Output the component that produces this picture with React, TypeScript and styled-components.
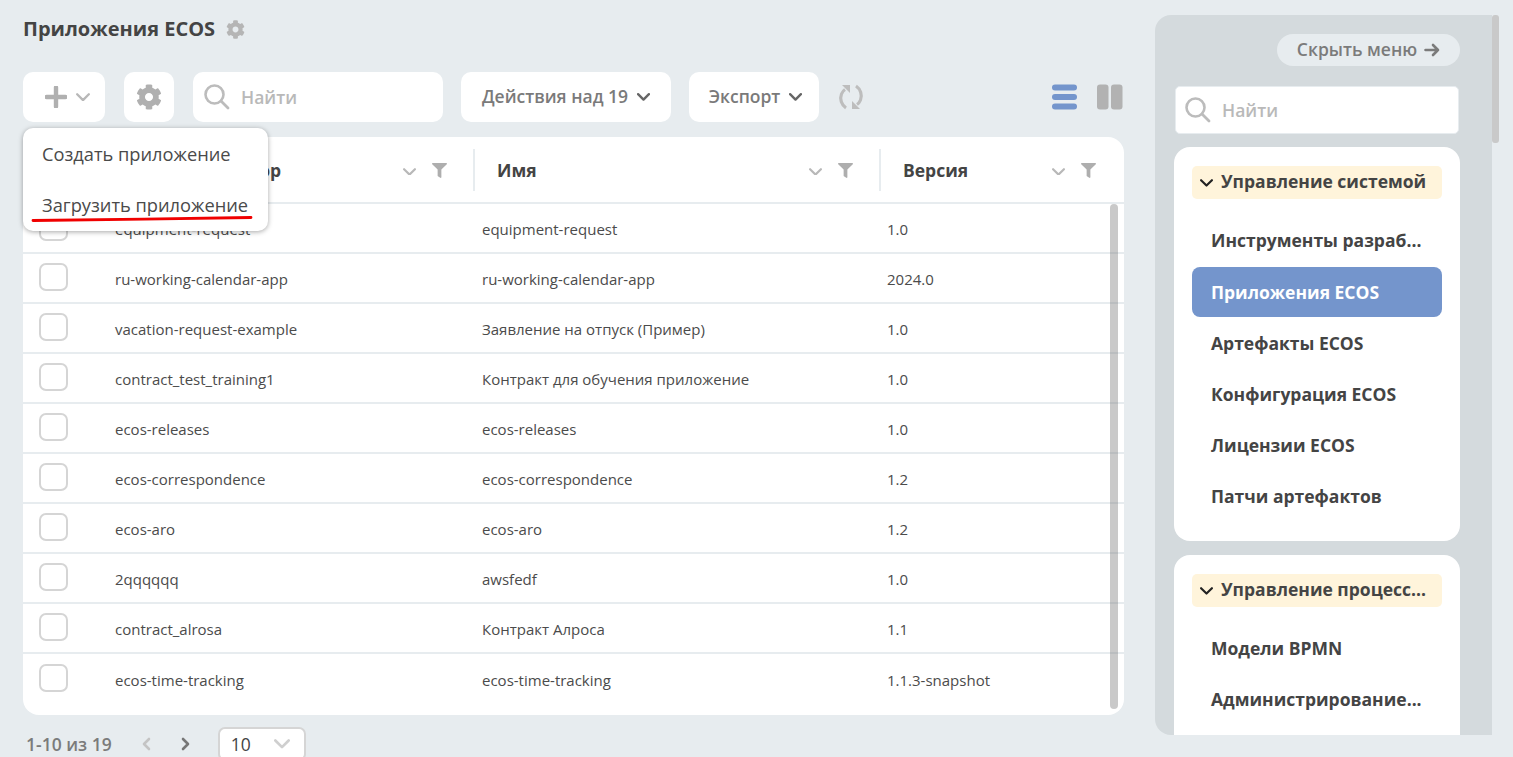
import React from 'react';
import styled, { createGlobalStyle } from 'styled-components';
import { FaCog, FaFilter } from 'react-icons/fa';

const GlobalStyle = createGlobalStyle`
  html, body {
    margin: 0;
    height: 100%;
    overflow: hidden;
    background: #e7ecef;
    font-family: "Open Sans", "Liberation Sans", sans-serif;
    color: #444;
  }
  * { box-sizing: border-box; }
`;

const Page = styled.div`
  display: flex;
  align-items: flex-start;
  height: 757px;
  padding: 15px 14px 0 23px;
`;

const Main = styled.main`
  position: relative;
  width: 1101px;
  flex-shrink: 0;
`;

const TitleRow = styled.div`
  display: flex;
  align-items: center;
  gap: 11px;
  height: 28px;
`;

const Title = styled.h1`
  margin: 0;
  font-size: 20px;
  line-height: 28px;
  font-weight: 700;
  color: #444;
`;

const Toolbar = styled.div`
  display: flex;
  align-items: center;
  height: 50px;
  margin-top: 29px;
`;

const ToolButton = styled.div<{ $w: number; $mr: number }>`
  display: flex;
  align-items: center;
  justify-content: center;
  gap: 9px;
  width: ${(p) => p.$w}px;
  height: 50px;
  margin-right: ${(p) => p.$mr}px;
  background: #fff;
  border-radius: 10px;
  font-size: 17.5px;
  font-weight: 600;
  color: #7a7a7a;
  flex-shrink: 0;
`;

const AddButton = styled(ToolButton)`
  padding-left: 7px;
`;

const MenuButton = styled(ToolButton)<{ $shift?: number }>`
  padding-left: ${(p) => p.$shift || 0}px;
  padding-bottom: 2px;

  svg {
    margin-top: 2px;
  }
`;

const SearchField = styled.div`
  display: flex;
  align-items: center;
  gap: 11px;
  width: 250px;
  height: 50px;
  margin-right: 18px;
  padding-left: 11px;
  padding-bottom: 1px;
  background: #fff;
  border-radius: 10px;
  font-size: 17.5px;
  font-weight: 600;
  color: #b9b9b9;
  flex-shrink: 0;
`;

const RefreshSlot = styled.div`
  display: flex;
  margin-left: 19px;
`;

const ViewSwitch = styled.div`
  display: flex;
  align-items: center;
  gap: 19px;
  margin-left: auto;
  margin-right: 1px;
`;

const Table = styled.section`
  position: relative;
  height: 578px;
  margin-top: 15px;
  background: #fff;
  border-radius: 16px;
  overflow: hidden;
`;

const HeadRow = styled.div`
  display: grid;
  grid-template-columns: 84px 366px 406px 1fr;
  height: 67px;
  border-bottom: 2px solid #e7ecef;
  padding-top: 12px;
`;

const HeadCell = styled.div<{ $sep?: boolean }>`
  display: flex;
  align-items: center;
  height: 42px;
  padding-left: ${(p) => (p.$sep ? 22 : 24)}px;
  padding-right: 26px;
  border-left: ${(p) => (p.$sep ? '2px solid #e7ecef' : '0 none')};
  font-size: 17.5px;
  font-weight: 700;
  color: #444;

  &:last-child {
    padding-right: 28px;
  }
`;

const HeadLabel = styled.span`
  flex: 1;
  white-space: nowrap;
`;

const HeadIcons = styled.span`
  display: flex;
  align-items: center;
  gap: 16px;
  color: #aeaeae;

  svg:first-child {
    margin-top: 3px;
  }
`;

const Row = styled.div`
  display: grid;
  grid-template-columns: 84px 367px 405px 1fr;
  align-items: center;
  height: 50px;
  border-bottom: 2px solid #e7ecef;
  font-size: 15px;
  color: #4b4b4b;

  &:last-child {
    border-bottom: 0 none;
  }
`;

const CheckCell = styled.div`
  padding-left: 16px;
  padding-bottom: 2px;
`;

const Check = styled.span`
  display: block;
  width: 29px;
  height: 28px;
  border: 2px solid #d5d5d5;
  border-radius: 7px;
  background: #fff;
`;

const Cell = styled.div`
  padding-left: 8px;
  padding-top: 2px;
`;

const TableScroll = styled.div`
  position: absolute;
  left: 1087px;
  top: 67px;
  width: 8px;
  height: 505px;
  background: rgba(120, 120, 120, 0.4);
  border-radius: 4px;
`;

const Footer = styled.div`
  display: flex;
  align-items: center;
  height: 32px;
  margin-top: 13px;
  padding-left: 3px;
  font-size: 17.5px;
  font-weight: 600;
  color: #7b7b7b;
`;

const Pager = styled.div`
  display: flex;
  align-items: center;
  gap: 30px;
  margin-left: 29px;
  margin-right: 27px;
`;

const PageSize = styled.div`
  display: flex;
  align-items: center;
  justify-content: space-between;
  width: 88px;
  height: 34px;
  padding: 0 14px 0 11px;
  background: #fff;
  border: 2px solid #d5d5d5;
  border-radius: 7px;
  font-size: 17.5px;
  font-weight: 400;
  color: #444;
`;

const Menu = styled.div`
  position: absolute;
  left: 0;
  top: 113px;
  width: 245px;
  height: 103px;
  padding: 9px 19px 0;
  background: #fff;
  border-radius: 10px;
  box-shadow: 0 1px 5px rgba(0, 0, 0, 0.35);
  font-size: 18.25px;
  color: #4a4a4a;
  z-index: 2;
`;

const MenuItem = styled.div`
  height: 51px;
  line-height: 33px;
  white-space: nowrap;
`;

const Underline = styled.svg`
  position: absolute;
  left: 8px;
  top: 87px;
`;

const Sidebar = styled.aside`
  display: flex;
  flex-direction: column;
  width: 337px;
  height: 720px;
  margin-left: 31px;
  padding: 19px 32px 0 19px;
  background: #d4dadd;
  border-radius: 16px 0 0 16px;
  overflow: hidden;
  flex-shrink: 0;
`;

const HideButton = styled.div`
  display: flex;
  align-items: center;
  justify-content: center;
  gap: 7px;
  align-self: flex-end;
  width: 183px;
  height: 32px;
  padding-bottom: 2px;
  background: #e7ecef;
  border-radius: 16px;
  font-size: 17.5px;
  font-weight: 600;
  color: #7b7b7b;
  flex-shrink: 0;

  svg {
    margin-top: 2px;
  }
`;

const SideSearch = styled(SearchField)`
  width: 284px;
  height: 48px;
  margin: 20px 0 13px 1px;
  padding-left: 9px;
  border: 1px solid #e7ecef;
  border-radius: 5px;
`;

const SideCard = styled.div<{ $h: number }>`
  height: ${(p) => p.$h}px;
  margin-bottom: 14px;
  padding: 19px 18px 0;
  background: #fff;
  border-radius: 16px;
  flex-shrink: 0;
`;

const Group = styled.div`
  display: flex;
  align-items: center;
  gap: 8px;
  height: 33px;
  margin-bottom: 15px;
  padding-left: 8px;
  padding-bottom: 4px;
  background: #fff4db;
  border-radius: 5px;
  font-size: 17.5px;
  font-weight: 700;
  color: #444;

  svg {
    margin-top: 5px;
  }
`;

const SideItem = styled.div<{ $active?: boolean }>`
  display: flex;
  align-items: center;
  height: ${(p) => (p.$active ? 50 : 51)}px;
  margin-top: ${(p) => (p.$active ? 2 : 0)}px;
  padding-left: 19px;
  border-radius: 8px;
  background: ${(p) => (p.$active ? '#7495cc' : 'transparent')};
  font-size: 17.5px;
  font-weight: 700;
  color: ${(p) => (p.$active ? '#fff' : '#444')};
`;

const PageScroll = styled.div`
  width: 7px;
  height: 128px;
  background: #c9c9c9;
  border-radius: 3px;
  flex-shrink: 0;
`;

const Chevron = ({ size = 12, color = '#b8b8b8', width = 2 }: { size?: number; color?: string; width?: number }) => (
  <svg width={size} height={size * 0.6} viewBox="0 0 12 7" fill="none">
    <path d="M1 1l5 5 5-5" stroke={color} strokeWidth={width} strokeLinecap="round" strokeLinejoin="round" />
  </svg>
);

const Back = ({ color, flip }: { color: string; flip?: boolean }) => (
  <svg width="10" height="14" viewBox="0 0 10 14" fill="none">
    <path d={flip ? 'M2 2l5 5-5 5' : 'M8 2L3 7l5 5'} stroke={color} strokeWidth="2.6" strokeLinecap="round" strokeLinejoin="round" />
  </svg>
);

const SearchIcon = () => (
  <svg width="26" height="26" viewBox="0 0 26 26" fill="none">
    <circle cx="10.5" cy="10.5" r="9" stroke="#bcbcbc" strokeWidth="2.6" />
    <path d="M17 17l7 7" stroke="#bcbcbc" strokeWidth="2.8" strokeLinecap="round" />
  </svg>
);

const Plus = () => (
  <svg width="22" height="22" viewBox="0 0 22 22">
    <path d="M11 1.500v19M1.500 11h19" stroke="#b0b0b0" strokeWidth="4.4" strokeLinecap="round" />
  </svg>
);

const Refresh = () => (
  <svg width="26" height="26" viewBox="0 0 26 26" fill="none">
    <path d="M8 24C3.500 21 1.500 15 3.500 10 4.300 8 5.500 6.500 7 5.500" stroke="#bdbdbd" strokeWidth="3.200" />
    <path d="M4 1h8v8z" fill="#bdbdbd" />
    <path d="M18 2C22.500 5 24.500 11 22.500 16 21.700 18 20.500 19.500 19 20.500" stroke="#bdbdbd" strokeWidth="3.200" />
    <path d="M22 25h-8v-8z" fill="#bdbdbd" />
  </svg>
);

const ListView = () => (
  <svg width="26" height="26" viewBox="0 0 26 26" fill="#7495cc">
    <rect x="0" y="0.500" width="25" height="6" rx="3" />
    <rect x="0" y="10" width="25" height="6" rx="3" />
    <rect x="0" y="19.500" width="25" height="6" rx="3" />
  </svg>
);

const ColumnsView = () => (
  <svg width="26" height="26" viewBox="0 0 26 26" fill="#b2b2b2">
    <rect x="0" y="0.500" width="11.500" height="25" rx="3" />
    <rect x="14" y="0.500" width="11.500" height="25" rx="3" />
  </svg>
);

const rows = [
  ['equipment-request', 'equipment-request', '1.0'],
  ['ru-working-calendar-app', 'ru-working-calendar-app', '2024.0'],
  ['vacation-request-example', 'Заявление на отпуск (Пример)', '1.0'],
  ['contract_test_training1', 'Контракт для обучения приложение', '1.0'],
  ['ecos-releases', 'ecos-releases', '1.0'],
  ['ecos-correspondence', 'ecos-correspondence', '1.2'],
  ['ecos-aro', 'ecos-aro', '1.2'],
  ['2qqqqqq', 'awsfedf', '1.0'],
  ['contract_alrosa', 'Контракт Алроса', '1.1'],
  ['ecos-time-tracking', 'ecos-time-tracking', '1.1.3-snapshot'],
];

const HeadTools = () => (
  <HeadIcons>
    <Chevron size={13} />
    <FaFilter size={15} />
  </HeadIcons>
);

export default function App() {
  return (
    <>
      <GlobalStyle />
      <Page>
        <Main>
          <TitleRow>
            <Title>Приложения ECOS</Title>
            <FaCog size={19} color="#b5b5b5" />
          </TitleRow>
          <Toolbar>
            <AddButton $w={82} $mr={19}>
              <Plus />
              <Chevron size={14} />
            </AddButton>
            <ToolButton $w={50} $mr={19}>
              <FaCog size={26} color="#b0b0b0" />
            </ToolButton>
            <SearchField>
              <SearchIcon />
              Найти
            </SearchField>
            <MenuButton $w={210} $mr={18}>
              Действия над 19
              <Chevron size={13} color="#666" width={2.2} />
            </MenuButton>
            <MenuButton $w={130} $mr={0} $shift={3}>
              Экспорт
              <Chevron size={13} color="#666" width={2.2} />
            </MenuButton>
            <RefreshSlot>
              <Refresh />
            </RefreshSlot>
            <ViewSwitch>
              <ListView />
              <ColumnsView />
            </ViewSwitch>
          </Toolbar>
          <Table>
            <TableScroll />
            <HeadRow>
              <div />
              <HeadCell>
                <HeadLabel>Идентификатор</HeadLabel>
                <HeadTools />
              </HeadCell>
              <HeadCell $sep>
                <HeadLabel>Имя</HeadLabel>
                <HeadTools />
              </HeadCell>
              <HeadCell $sep>
                <HeadLabel>Версия</HeadLabel>
                <HeadTools />
              </HeadCell>
            </HeadRow>
            {rows.map((r) => (
              <Row key={r[0]}>
                <CheckCell>
                  <Check />
                </CheckCell>
                <Cell>{r[0]}</Cell>
                <Cell>{r[1]}</Cell>
                <Cell>{r[2]}</Cell>
              </Row>
            ))}
          </Table>
          <Footer>
            1-10 из 19
            <Pager>
              <Back color="#c4c4c4" />
              <Back color="#777" flip />
            </Pager>
            <PageSize>
              10
              <Chevron size={16} color="#cfcfcf" />
            </PageSize>
          </Footer>
          <Menu>
            <MenuItem>Создать приложение</MenuItem>
            <MenuItem>Загрузить приложение</MenuItem>
            <Underline width="224" height="8" viewBox="0 0 224 8" fill="none">
              <path d="M2 5.500C60 4.500 160 4 220 2.500" stroke="#f00000" strokeWidth="2.800" strokeLinecap="round" />
            </Underline>
          </Menu>
        </Main>
        <Sidebar>
          <HideButton>
            Скрыть меню
            <svg width="16" height="14" viewBox="0 0 16 14" fill="none">
              <path d="M1.500 7h12.500M9 2l5 5-5 5" stroke="#7b7b7b" strokeWidth="2.600" strokeLinecap="round" strokeLinejoin="round" />
            </svg>
          </HideButton>
          <SideSearch>
            <SearchIcon />
            Найти
          </SideSearch>
          <SideCard $h={394}>
            <Group>
              <Chevron size={13} color="#222" />
              Управление системой
            </Group>
            <SideItem>Инструменты разраб...</SideItem>
            <SideItem $active>Приложения ECOS</SideItem>
            <SideItem>Артефакты ECOS</SideItem>
            <SideItem>Конфигурация ECOS</SideItem>
            <SideItem>Лицензии ECOS</SideItem>
            <SideItem>Патчи артефактов</SideItem>
          </SideCard>
          <SideCard $h={300}>
            <Group>
              <Chevron size={13} color="#222" />
              Управление процесс...
            </Group>
            <SideItem>Модели BPMN</SideItem>
            <SideItem>Администрирование...</SideItem>
          </SideCard>
        </Sidebar>
        <PageScroll />
      </Page>
    </>
  );
}
